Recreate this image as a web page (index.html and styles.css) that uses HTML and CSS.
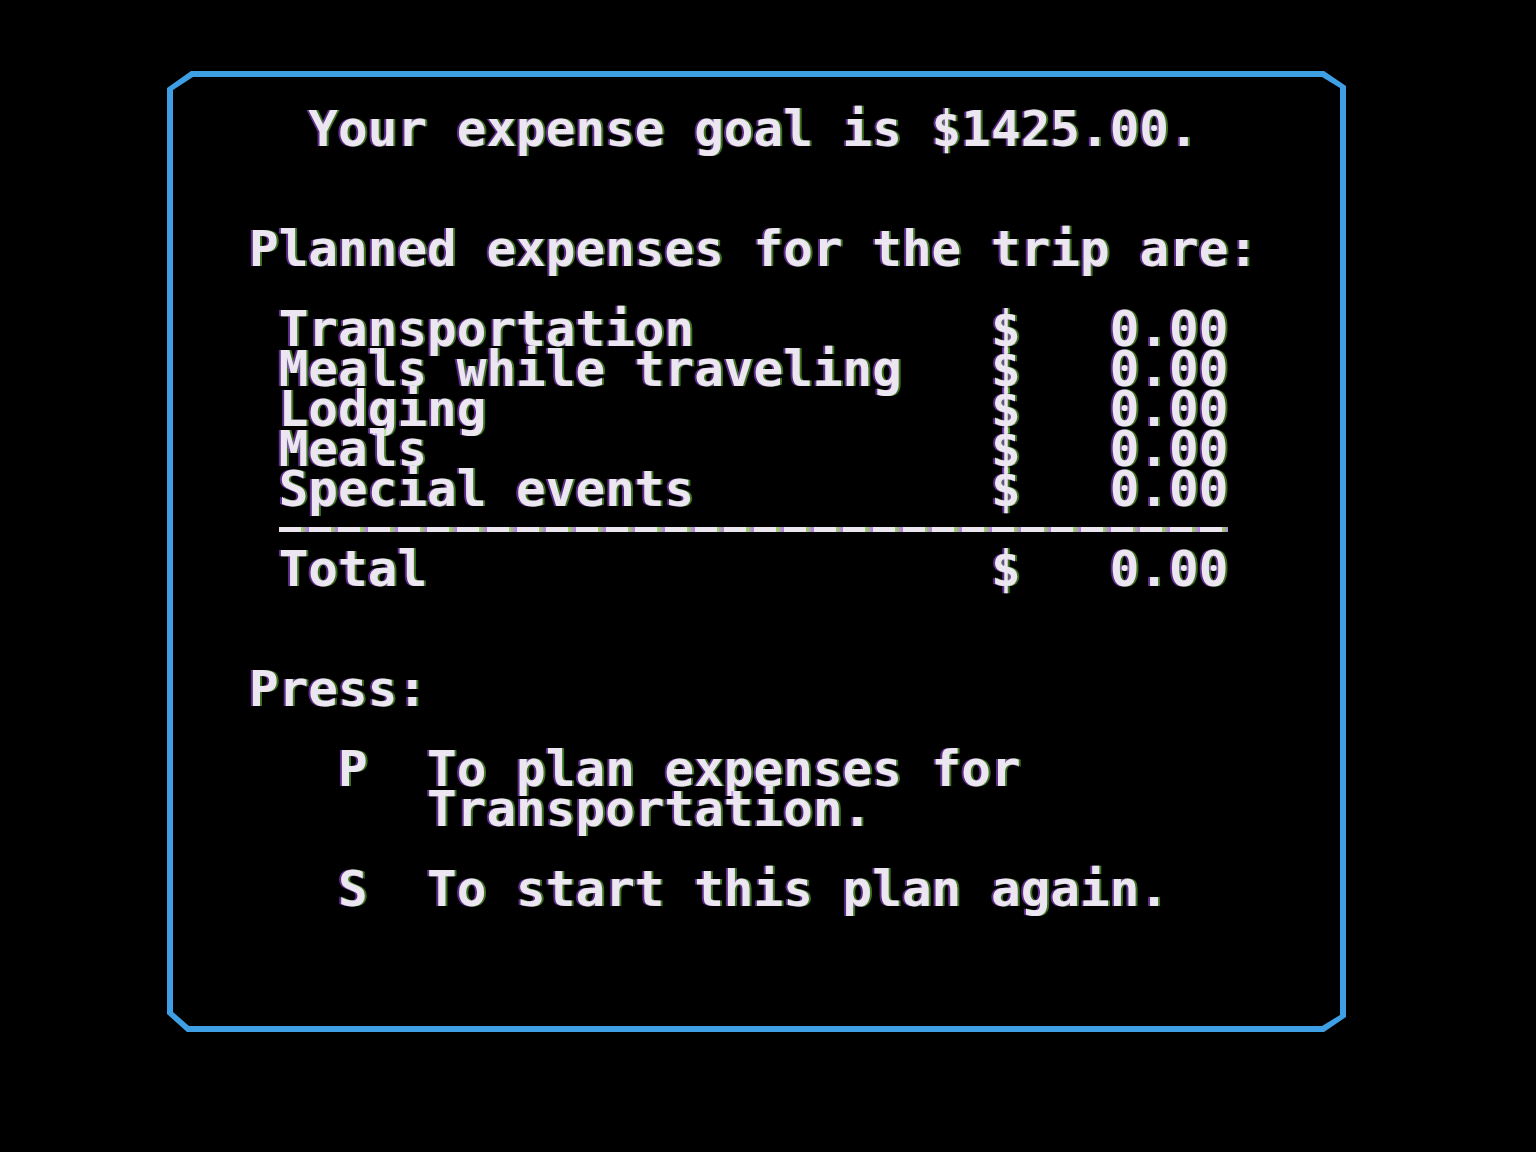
FILE: index.html
```html
<!DOCTYPE html>
<html lang="en">
<head>
<meta charset="utf-8">
<title>Expense Plan</title>
<link rel="stylesheet" href="styles.css">
</head>
<body>
<main class="screen">
  <section class="frame">
    <div class="inner">
      <div class="text">
        <div class="line title">Your expense goal is $1425.00.</div>
        <div class="blank two"></div>
        <div class="line">Planned expenses for the trip are:</div>
        <div class="blank"></div>
        <div class="table">
          <div class="row"><span>Transportation</span><span>$</span><span class="amt">0.00</span></div>
          <div class="row"><span>Meals while traveling</span><span>$</span><span class="amt">0.00</span></div>
          <div class="row"><span>Lodging</span><span>$</span><span class="amt">0.00</span></div>
          <div class="row"><span>Meals</span><span>$</span><span class="amt">0.00</span></div>
          <div class="row"><span>Special events</span><span>$</span><span class="amt">0.00</span></div>
          <div class="rule"><div class="rule-line"></div></div>
          <div class="row"><span>Total</span><span>$</span><span class="amt">0.00</span></div>
        </div>
        <div class="blank two"></div>
        <div class="line">Press:</div>
        <div class="blank"></div>
        <div class="option">
          <span class="key">P</span>
          <span class="desc">To plan expenses for<br>Transportation.</span>
        </div>
        <div class="blank"></div>
        <div class="option">
          <span class="key">S</span>
          <span class="desc">To start this plan again.</span>
        </div>
      </div>
    </div>
  </section>
</main>
</body>
</html>
```

FILE: styles.css
```css
html, body {
  margin: 0;
  padding: 0;
  background: #000;
}

body {
  width: 1536px;
  height: 1152px;
  overflow: hidden;
}

.screen {
  padding: 71px 0 0 167px;
}

.frame {
  box-sizing: border-box;
  width: 1179px;
  height: 961px;
  padding: 6px;
  background: #3f9fe4;
  clip-path: polygon(24px 0, calc(100% - 22px) 0, 100% 15px, 100% calc(100% - 15px), calc(100% - 22px) 100%, 20px 100%, 0 calc(100% - 18px), 0 17px);
}

.inner {
  box-sizing: border-box;
  height: 100%;
  background: #000;
  clip-path: polygon(20px 0, calc(100% - 18px) 0, 100% 11px, 100% calc(100% - 11px), calc(100% - 18px) 100%, 16px 100%, 0 calc(100% - 14px), 0 13px);
  padding: 32px 0 0 76px;
}

.text {
  font-family: "DejaVu Sans Mono", "Liberation Mono", monospace;
  font-weight: bold;
  font-size: 49.3px;
  line-height: 40px;
  color: #ece6f0;
  text-shadow: -2px 0 0 rgba(170, 80, 255, 0.55), 2px 0 0 rgba(120, 225, 60, 0.5);
  filter: blur(0.6px);
}

.line {
  height: 40px;
  white-space: pre;
}

.title {
  padding-left: 2ch;
}

.blank {
  height: 40px;
}

.blank.two {
  height: 80px;
}

.table {
  padding-left: 1ch;
  width: 32ch;
}

.row {
  display: grid;
  grid-template-columns: 24ch 4ch 4ch;
  height: 40px;
  white-space: pre;
}

.amt {
  text-align: right;
}

.rule {
  height: 40px;
  display: flex;
  align-items: center;
}

.rule-line {
  width: 100%;
  height: 5px;
  background: repeating-linear-gradient(90deg, #ece6f0 0, #ece6f0 22px, #9ad85a 22px, #b87af0 29.7px);
}

.option {
  display: grid;
  grid-template-columns: 3ch 3ch auto;
  line-height: 40px;
}

.key {
  grid-column: 2;
}

.desc {
  grid-column: 3;
  white-space: pre;
}
```
